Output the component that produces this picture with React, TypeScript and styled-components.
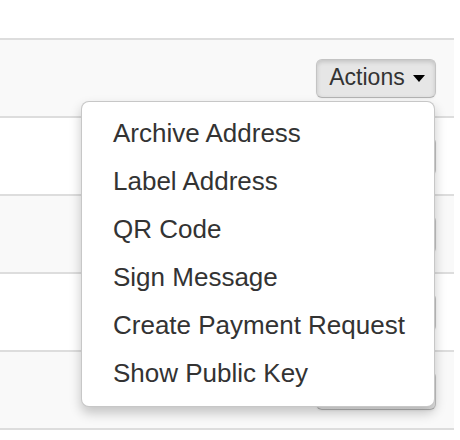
import styled, { createGlobalStyle } from "styled-components";

const GlobalStyle = createGlobalStyle`
  body {
    margin: 0;
    background: #ffffff;
    font-family: "Liberation Sans", Arial, sans-serif;
  }
`;

const Page = styled.div`
  padding-top: 38px;
  width: 460px;
  height: 440px;
  box-sizing: border-box;
  overflow: hidden;
`;

const Table = styled.div`
  width: 454px;
  border-bottom: 2px solid #dddddd;
`;

const Row = styled.div<{ striped: boolean }>`
  display: flex;
  justify-content: flex-end;
  align-items: center;
  height: 76px;
  padding-right: 18px;
  border-top: 2px solid #dddddd;
  background-color: ${(props) => (props.striped ? "#f9f9f9" : "#ffffff")};
`;

const ActionsCell = styled.div`
  position: relative;
`;

const Button = styled.button<{ open: boolean }>`
  display: flex;
  align-items: center;
  justify-content: center;
  gap: 8px;
  width: 120px;
  height: 39px;
  padding: 0 0 1px 2px;
  font-family: "Liberation Sans", Arial, sans-serif;
  font-size: 23px;
  color: #333333;
  border: 1px solid #c4c4c4;
  border-bottom-color: #b3b3b3;
  border-radius: 6px;
  background: ${(props) =>
    props.open ? "#e6e6e6" : "linear-gradient(#ffffff, #e6e6e6)"};
  box-shadow: ${(props) =>
    props.open
      ? "inset 0 2px 4px rgba(0, 0, 0, 0.15), 0 1px 2px rgba(0, 0, 0, 0.05)"
      : "inset 0 1px 0 rgba(255, 255, 255, 0.2), 0 1px 2px rgba(0, 0, 0, 0.05)"};
  cursor: pointer;
`;

const Caret = styled.span`
  display: inline-block;
  width: 0;
  height: 0;
  margin-top: 1px;
  border-top: 7px solid #000000;
  border-left: 6px solid transparent;
  border-right: 6px solid transparent;
`;

const Menu = styled.ul`
  position: absolute;
  top: calc(100% + 3px);
  right: 1px;
  z-index: 10;
  width: 354px;
  box-sizing: border-box;
  margin: 0;
  padding: 7px 0 9px;
  list-style: none;
  background: #ffffff;
  border: 1px solid rgba(0, 0, 0, 0.22);
  border-radius: 8px;
  box-shadow: 0 6px 12px rgba(0, 0, 0, 0.22);
`;

const MenuItem = styled.li`
  padding: 0 31px;
  font-size: 26px;
  line-height: 48px;
  color: #333333;
  white-space: nowrap;
  cursor: pointer;
`;

const items = [
  "Archive Address",
  "Label Address",
  "QR Code",
  "Sign Message",
  "Create Payment Request",
  "Show Public Key",
];

function App() {
  const rows = [0, 1, 2, 3, 4];
  return (
    <>
      <GlobalStyle />
      <Page>
        <Table>
          {rows.map((r) => (
            <Row key={r} striped={r % 2 === 0}>
              <ActionsCell>
                <Button open={r === 0}>
                  Actions <Caret />
                </Button>
                {r === 0 && (
                  <Menu>
                    {items.map((item) => (
                      <MenuItem key={item}>{item}</MenuItem>
                    ))}
                  </Menu>
                )}
              </ActionsCell>
            </Row>
          ))}
        </Table>
      </Page>
    </>
  );
}

export default App;
